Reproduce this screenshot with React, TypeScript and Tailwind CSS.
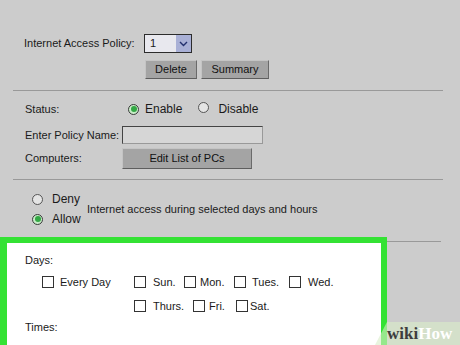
import React from 'react';

function Radio({ checked }: { checked?: boolean }) {
  return (
    <span
      className={`inline-flex h-[11px] w-[11px] items-center justify-center rounded-full border ${
        checked ? 'border-[#3a3a3a] bg-[#c8ecc8]' : 'border-[#555] bg-[#e4e4e4]'
      }`}
    >
      {checked && <span className="h-[6px] w-[6px] rounded-full bg-[#33a845]" />}
    </span>
  );
}

function Box() {
  return <span className="inline-block h-[12px] w-[12px] shrink-0 border border-[#333] bg-white" />;
}

function Day({ label, w, gap }: { label: string; w: string; gap: string }) {
  return (
    <div className={`flex items-center ${w}`}>
      <Box />
      <span className={gap}>{label}</span>
    </div>
  );
}

const btn =
  'flex items-center justify-center h-[19px] bg-[#a4a4a4] border border-t-[#c4c4c4] border-l-[#c4c4c4] border-b-[#5e5e5e] border-r-[#6a6a6a] text-[#111]';

export default function App() {
  return (
    <div
      className="relative h-[345px] w-[460px] overflow-hidden bg-[#cccccc] text-[11px] text-[#1a1a1a]"
      style={{ fontFamily: '"Liberation Sans", Arial, sans-serif' }}
    >
      {/* Policy selector */}
      <div className="pt-[34px]">
        <div className="flex h-[19px] items-center pl-[24px]">
          <span className="w-[120px]">Internet Access Policy:</span>
          <div className="flex h-[19px] w-[48px] items-center border border-[#2c2c2c] bg-[#e8e8ee]">
            <span className="flex-1 pl-[5px]">1</span>
            <span className="flex h-full w-[15px] items-center justify-center bg-[#a9b0d6]">
              <svg width="9" height="6" viewBox="0 0 9 6">
                <path d="M1 1 L4.5 4.5 L8 1" fill="none" stroke="#23306e" strokeWidth="1.4" />
              </svg>
            </span>
          </div>
        </div>
        <div className="mt-[7px] flex gap-[4px] pl-[145px]">
          <button className={`${btn} w-[52px]`}>Delete</button>
          <button className={`${btn} w-[68px]`}>Summary</button>
        </div>
      </div>

      <div className="mx-[13px] mt-[11px] w-[430px] border-t border-[#999]" />

      {/* Status / name / computers */}
      <div className="flex h-[18px] mt-[9px] items-center pl-[25px]">
        <span className="w-[103px]">Status:</span>
        <Radio checked />
        <span className="ml-[6px] text-[12px]">Enable</span>
        <span className="ml-[16px]">
          <Radio />
        </span>
        <span className="ml-[9px] text-[12px]">Disable</span>
      </div>
      <div className="mt-[8px] flex h-[18px] items-center pl-[25px]">
        <span className="w-[97px]">Enter Policy Name:</span>
        <div className="h-[18px] w-[141px] border border-[#444] border-b-[#999] border-r-[#999] bg-[#d6d6d6]" />
      </div>
      <div className="mt-[4px] flex h-[21px] items-center pl-[25px]">
        <span className="w-[97px]">Computers:</span>
        <button className={`${btn} h-[21px] w-[130px]`}>Edit List of PCs</button>
      </div>

      <div className="mx-[13px] mt-[10px] w-[430px] border-t border-[#999]" />

      {/* Deny / Allow */}
      <div className="mt-[9px] flex items-center pl-[32px]">
        <div className="flex w-[55px] flex-col">
          <div className="flex h-[20px] items-center gap-[9px]">
            <Radio />
            <span className="text-[12px]">Deny</span>
          </div>
          <div className="flex h-[20px] items-center gap-[9px]">
            <Radio checked />
            <span className="text-[12px]">Allow</span>
          </div>
        </div>
        <span>Internet access during selected days and hours</span>
      </div>

      {/* Highlighted days */}
      <div className="mt-[8px] flex">
        <div className="h-[140px] w-[387px] border-[6px] border-l-[7px] border-[#34e234] bg-white pl-[18px] pt-[10px]">
          <div className="h-[14px] leading-[14px]">Days:</div>
          <div className="mt-[8px] flex h-[14px] items-center pl-[17px]">
            <Day label="Every Day" w="w-[92px]" gap="ml-[6px]" />
            <Day label="Sun." w="w-[50px]" gap="ml-[7px]" />
            <Day label="Mon." w="w-[50px]" gap="ml-[4px]" />
            <Day label="Tues." w="w-[55px]" gap="ml-[6px]" />
            <Day label="Wed." w="w-[60px]" gap="ml-[7px]" />
          </div>
          <div className="mt-[10px] flex h-[14px] items-center pl-[109px]">
            <Day label="Thurs." w="w-[59px]" gap="ml-[7px]" />
            <Day label="Fri." w="w-[43px]" gap="ml-[4px]" />
            <Day label="Sat." w="w-[50px]" gap="ml-[2px]" />
          </div>
          <div className="mt-[7px] h-[14px] leading-[14px]">Times:</div>
        </div>
        <div className="mt-[4px] h-0 w-[54px] border-t border-[#999]" />
      </div>

      {/* watermark */}
      <div
        className="absolute bottom-0 right-0 flex h-[23px] w-[85px] items-center pl-[12px] bg-[#d9ecc8]/60"
        style={{ clipPath: 'polygon(12px 0, 100% 0, 100% 100%, 0 100%)' }}
      >
        <span
          className="text-[17px] font-bold leading-none"
          style={{ fontFamily: '"Liberation Serif", "DejaVu Serif", serif' }}
        >
          <span className="text-[#3d3d3d]">wiki</span>
          <span className="text-white">How</span>
        </span>
      </div>
    </div>
  );
}
